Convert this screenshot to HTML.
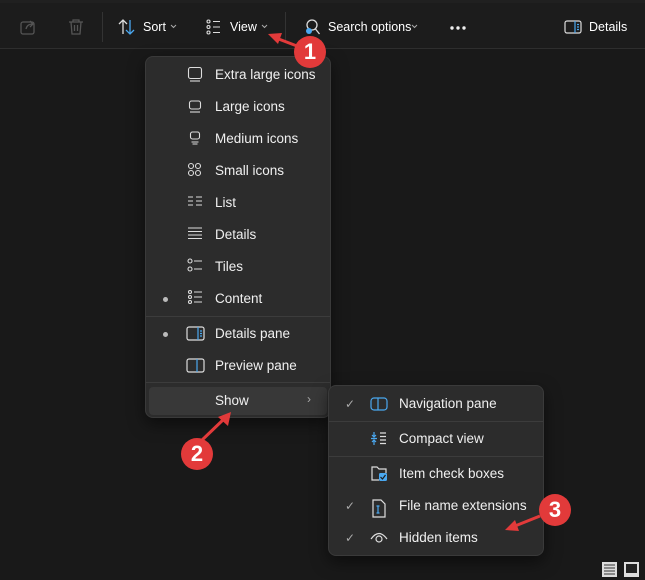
<!DOCTYPE html>
<html><head><style>
*{margin:0;padding:0;box-sizing:border-box}
body{width:645px;height:580px;background:#191919;position:relative;overflow:hidden;font-family:"Liberation Sans",sans-serif;color:#fff;font-size:13px}
.tb{position:absolute;left:0;top:3px;width:645px;height:46px;background:#1c1c1c;border-bottom:1px solid #2e2e2e}
.t{position:absolute;top:20px;font-size:12.5px;color:#fff}
.menu{position:absolute;background:#2c2c2c;border:1px solid #3a3a3a;border-radius:8px;box-shadow:0 6px 16px rgba(0,0,0,.5)}
.it{position:absolute;left:0;font-size:13.5px;color:#f0f0f0}
.sep{position:absolute;left:0;right:0;height:1px;background:#3c3c3c}
.dot{position:absolute;width:5px;height:5px;border-radius:50%;background:#bbb}
.ck{position:absolute;color:#aaa;font-size:12px}
.badge{position:absolute;width:32px;height:32px;border-radius:50%;background:#e23a3a;color:#fff;font-weight:bold;font-size:22px;text-align:center;line-height:32px}
svg{position:absolute}
</style></head><body>
<div style="position:absolute;left:0;top:0;width:645px;height:3px;background:#202020"></div>
<div class="tb"></div>
<svg style="left:18px;top:17px" width="20" height="20" viewBox="0 0 20 20" fill="none" stroke="#555" stroke-width="1.3"><rect x="3" y="5" width="13" height="12" rx="2"/><path d="M8 12 Q9 7 15 7 M12 4 l3 3 -3 3"/></svg>
<svg style="left:67px;top:17px" width="18" height="20" viewBox="0 0 18 20" fill="none" stroke="#555" stroke-width="1.3"><path d="M2 5h14M6 5V3h6v2M4 5l1 12h8l1-12M7.5 8v6M10.5 8v6"/></svg>
<div style="position:absolute;left:102px;top:12px;width:1px;height:30px;background:#333"></div>
<svg style="left:118px;top:19px" width="18" height="16" viewBox="0 0 18 16" fill="none" stroke-width="1.3"><path d="M5 15V1M1 5l4-4 4 4" stroke="#ddd"/><path d="M12 1v14M8 11l4 4 4-4" stroke="#4aa8f0"/></svg>
<div class="t" style="left:143px">Sort</div>
<svg style="left:0;top:0" width="645" height="50" fill="none" stroke="#aaa" stroke-width="1"><path d="M171 25l2.5 2.5 2.5-2.5M262 25l2.5 2.5 2.5-2.5M412 25l2.5 2.5 2.5-2.5"/><g fill="#eee" stroke="none"><circle cx="452" cy="28" r="1.7"/><circle cx="458" cy="28" r="1.7"/><circle cx="464" cy="28" r="1.7"/></g></svg>
<svg style="left:206px;top:19px" width="16" height="16" viewBox="0 0 16 16" fill="none" stroke="#ddd" stroke-width="1.1"><circle cx="2.5" cy="2.5" r="1.5"/><circle cx="2.5" cy="8" r="1.5"/><circle cx="2.5" cy="13.5" r="1.5"/><path d="M7 2.5h7M7 8h7M7 13.5h7"/></svg>
<div class="t" style="left:230px">View</div>
<div style="position:absolute;left:285px;top:12px;width:1px;height:30px;background:#333"></div>
<svg style="left:303px;top:17px" width="20" height="20" viewBox="0 0 20 20" fill="none" stroke="#ddd" stroke-width="1.3"><circle cx="9" cy="8" r="5"/><path d="M12.5 12l4 5"/><circle cx="6" cy="14" r="3" fill="#4aa8f0" stroke="none"/></svg>
<div class="t" style="left:328px">Search options</div>
<svg style="left:564px;top:20px" width="18" height="14" viewBox="0 0 18 14" fill="none" stroke-width="1.2"><rect x="1" y="1" width="16" height="12" rx="2" stroke="#ddd"/><path d="M11 1v12M13 4.5h2M13 7h2M13 9.5h2" stroke="#4aa8f0"/></svg>
<div class="t" style="left:589px">Details</div>

<div class="menu" style="left:145px;top:56px;width:186px;height:362px">
<div class="it" style="left:69px;top:10px">Extra large icons</div>
<div class="it" style="left:69px;top:42px">Large icons</div>
<div class="it" style="left:69px;top:74px">Medium icons</div>
<div class="it" style="left:69px;top:106px">Small icons</div>
<div class="it" style="left:69px;top:138px">List</div>
<div class="it" style="left:69px;top:170px">Details</div>
<div class="it" style="left:69px;top:202px">Tiles</div>
<div class="it" style="left:69px;top:234px">Content</div>
<div class="dot" style="left:17px;top:240px"></div>
<div class="sep" style="top:259px"></div>
<div class="it" style="left:69px;top:269px">Details pane</div>
<div class="dot" style="left:17px;top:275px"></div>
<div class="it" style="left:69px;top:301px">Preview pane</div>
<div class="sep" style="top:325px"></div>
<div style="position:absolute;left:3px;top:330px;width:178px;height:28px;background:#383838;border-radius:4px"></div>
<div class="it" style="left:69px;top:336px">Show</div>
<div class="it" style="left:161px;top:335px;color:#aaa;font-size:12px">›</div>
<svg style="left:41px;top:9px" width="16" height="260" viewBox="0 0 16 260" fill="none" stroke="#ddd" stroke-width="1.1">
<rect x="1.5" y="1.5" width="13" height="11" rx="2"/><path d="M3 15h10"/>
<rect x="2.5" y="35" width="11" height="8" rx="2"/><path d="M3 46h10"/>
<rect x="3.5" y="66" width="9" height="7" rx="2"/><path d="M4.5 76h7M5.5 78h5"/>
<circle cx="4" cy="100" r="2.5"/><circle cx="11" cy="100" r="2.5"/><circle cx="4" cy="107" r="2.5"/><circle cx="11" cy="107" r="2.5"/>
<path d="M1 131h5M1 135h5M1 139h5M9 131h6M9 135h6M9 139h6"/>
<path d="M1 162h14M1 165.5h14M1 169h14M1 172.5h14"/>
<circle cx="3" cy="195" r="2"/><circle cx="3" cy="203" r="2"/><path d="M7 195h8M7 203h8"/>
<circle cx="3" cy="226" r="1.5"/><circle cx="3" cy="231" r="1.5"/><circle cx="3" cy="236" r="1.5"/><path d="M7 226h8M7 231h8M7 236h8"/>
</svg>
<svg style="left:40px;top:269px" width="20" height="50" viewBox="0 0 20 50" fill="none" stroke-width="1.2"><rect x="1" y="1" width="17" height="13" rx="2" stroke="#ddd"/><path d="M12 1v13M14 5h2M14 7.5h2M14 10h2" stroke="#4aa8f0"/><rect x="1" y="33" width="17" height="13" rx="2" stroke="#ddd"/><path d="M11 33v13" stroke="#4aa8f0"/></svg>
</div>

<div class="menu" style="left:328px;top:385px;width:216px;height:171px">
<div class="ck" style="left:16px;top:11px">✓</div><div class="it" style="left:70px;top:10px">Navigation pane</div>
<div class="sep" style="top:35px"></div>
<div class="it" style="left:70px;top:45px">Compact view</div>
<div class="sep" style="top:70px"></div>
<div class="it" style="left:70px;top:80px">Item check boxes</div>
<div class="ck" style="left:16px;top:113px">✓</div><div class="it" style="left:70px;top:112px">File name extensions</div>
<div class="ck" style="left:16px;top:145px">✓</div><div class="it" style="left:70px;top:144px">Hidden items</div>
<svg style="left:41px;top:10px" width="20" height="150" viewBox="0 0 20 150" fill="none" stroke-width="1.2">
<rect x="1" y="2" width="16" height="12" rx="3" stroke="#4aa8f0"/><path d="M8 2v12" stroke="#4aa8f0"/>
<path d="M4 36v5M2 39l2 2 2-2M4 49v-5M2 46l2-2 2 2M1 42.5h6" stroke="#4aa8f0"/><path d="M10 37h6M10 40.5h6M10 44h6M10 47.5h6" stroke="#ddd"/>
<path d="M2 81v-10h5l2 2h7v4M2 81v3h7" stroke="#ddd"/><rect x="9" y="77" width="8" height="8" rx="1.5" fill="#4aa8f0" stroke="none"/><path d="M10.5 81l2 2 3-4" stroke="#1b1b1b"/>
<path d="M3 104h8l4 4v13H3z" stroke="#ddd"/><path d="M8 110v7M6.5 110h3M6.5 117h3" stroke="#4aa8f0"/>
<path d="M1 143 Q9 132 17 143" stroke="#ddd"/><circle cx="9" cy="143" r="3" stroke="#ddd"/>
</svg>
</div>

<svg style="left:0;top:0" width="645" height="580" viewBox="0 0 645 580" fill="#e23a3a" stroke="#e23a3a" stroke-width="3">
<path d="M297 46 L276 38"/><path d="M268 34 l14 -1 -4 11z" stroke="none"/>
<path d="M200 442 L225 418"/><path d="M231 412 l-3 14 -10 -9z" stroke="none"/>
<path d="M540 516 L515 526"/><path d="M505 530 l10 -10 4 11z" stroke="none"/>
</svg>
<div class="badge" style="left:294px;top:36px">1</div>
<div class="badge" style="left:181px;top:438px">2</div>
<div class="badge" style="left:539px;top:494px">3</div>

<svg style="left:601px;top:561px" width="40" height="17" viewBox="0 0 40 17"><rect x="1" y="1" width="15" height="15" fill="#ddd"/><path d="M3 4h11M3 7h11M3 10h11M3 13h11" stroke="#333"/><rect x="23" y="1" width="15" height="15" fill="#ddd"/><rect x="25" y="3" width="11" height="9" fill="#222"/></svg>
</body></html>
